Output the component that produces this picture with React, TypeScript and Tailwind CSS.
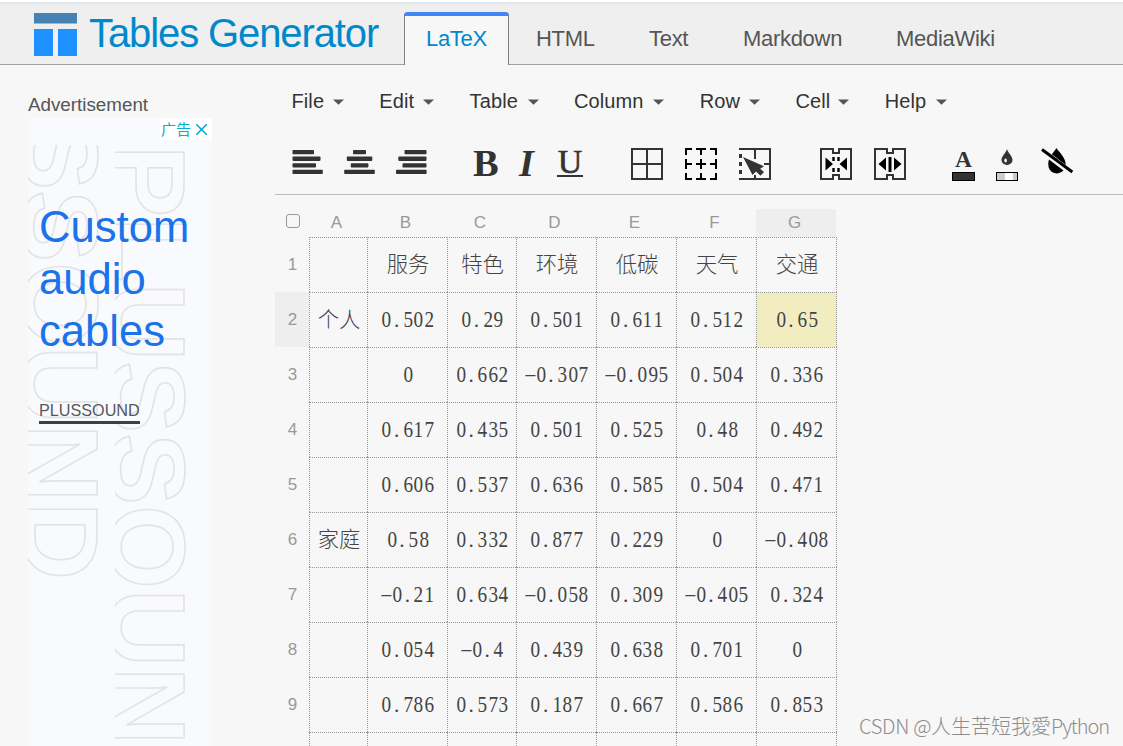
import type { ReactNode } from "react";
import { X } from "lucide-react";
import clsx from "clsx";

const tabs = [
  { label: "HTML", width: "w-[113px]" },
  { label: "Text", width: "w-[94px]" },
  { label: "Markdown", width: "w-[153px]" },
  { label: "MediaWiki", width: "w-[110px]" },
];

const menus = [
  { label: "File", width: "w-[52.5px]" },
  { label: "Edit", width: "w-[55px]" },
  { label: "Table", width: "w-[69px]" },
  { label: "Column", width: "w-[90.5px]" },
  { label: "Row", width: "w-[60.5px]" },
  { label: "Cell", width: "w-[54px]" },
  { label: "Help", width: "w-[62px]" },
];

const columns = ["A", "B", "C", "D", "E", "F", "G"];

const rows = [
  ["", "服务", "特色", "环境", "低碳", "天气", "交通"],
  ["个人", "0.502", "0.29", "0.501", "0.611", "0.512", "0.65"],
  ["", "0", "0.662", "-0.307", "-0.095", "0.504", "0.336"],
  ["", "0.617", "0.435", "0.501", "0.525", "0.48", "0.492"],
  ["", "0.606", "0.537", "0.636", "0.585", "0.504", "0.471"],
  ["家庭", "0.58", "0.332", "0.877", "0.229", "0", "-0.408"],
  ["", "-0.21", "0.634", "-0.058", "0.309", "-0.405", "0.324"],
  ["", "0.054", "-0.4", "0.439", "0.638", "0.701", "0"],
  ["", "0.786", "0.573", "0.187", "0.667", "0.586", "0.853"],
];

const selected = { row: 1, col: 6 };

const gridCols = "grid grid-cols-[34px_58px_80px_69px_80px_80px_80px_81px]";

const Logo = () => (
  <svg width="43" height="43" viewBox="0 0 43 43">
    <rect width="43" height="10.5" fill="#4682b4" />
    <rect y="16" width="19" height="27" fill="#1e90ff" />
    <rect x="24" y="16" width="19" height="27" fill="#1e90ff" />
  </svg>
);

const Header = () => (
  <header className="flex h-[65px] shrink-0 border-b border-[#a0a0a0] bg-[#efefef] pl-[34px]">
    <div className="mt-[13px]">
      <Logo />
    </div>
    <h1 className="ml-[12px] mt-[10px] w-[315px] whitespace-nowrap text-[40px] leading-[47px] tracking-[-1.1px] text-[#0088cc]">
      Tables Generator
    </h1>
    <nav className="flex text-[22px] tracking-[-0.3px] text-[#555]">
      <div className="relative mt-[12px] h-[53px] w-[105px] rounded-t-[4px] border-x border-[#808080] bg-[#f7f7f7] pl-[21px] text-[#0088cc]">
        <span className="absolute -left-px -right-px top-0 h-[4px] rounded-t-[4px] bg-[#4285f4]" />
        <span className="block pt-[11px] leading-[32px]">LaTeX</span>
      </div>
      <div className="ml-[27px] mt-[23px] flex leading-[32px]">
        {tabs.map((tab) => (
          <span key={tab.label} className={tab.width}>
            {tab.label}
          </span>
        ))}
      </div>
    </nav>
  </header>
);

const Advert = () => (
  <aside className="ml-[28px] w-[184px] shrink-0">
    <p className="mt-[28px] h-[25px] text-[18.8px] leading-[24px] text-[#555]">Advertisement</p>
    <div className="relative h-[628px] overflow-hidden bg-[#f9fafd]">
      <svg
        className="absolute left-0 top-[27px]"
        width="184"
        height="601"
        fill="none"
        stroke="#e2e3e6"
        strokeWidth="1.6"
        fontFamily="Liberation Sans"
        fontWeight="700"
        fontSize="108"
      >
        <svg x="0" y="0" width="80" height="601" overflow="hidden">
          <text transform="translate(-5 -27) rotate(90)">SSOUND</text>
        </svg>
        <svg x="87" y="0" width="90" height="601" overflow="hidden">
          <text transform="translate(-5 0) rotate(90)">PLUSSOUND</text>
        </svg>
      </svg>
      <div className="relative flex h-[22px] justify-end">
        <div className="flex w-[52px] items-center gap-[2px] bg-white pl-px font-['Noto_Sans_CJK_SC',sans-serif] text-[15px] leading-[22px] text-[#00aecd]">
          广告
          <X size={19} strokeWidth={2} className="-ml-px" />
        </div>
      </div>
      <div className="relative ml-[11px] mt-[61px] text-[43.6px] leading-[52px] text-[#1a73e8]">
        Custom
        <br />
        audio
        <br />
        cables
      </div>
      <div className="relative ml-[11px] mt-[46px] flex">
        <span className="h-[21px] w-[101px] whitespace-nowrap border-b-[3px] border-[#3c4043] text-[16.2px] leading-[14px] text-[#55585b]">
          PLUSSOUND
        </span>
      </div>
    </div>
  </aside>
);

const MenuBar = () => (
  <div className="flex gap-[35.3px] pl-[16.5px] pt-[24px] text-[20px] leading-[24px] tracking-[0.1px] text-[#333]">
    {menus.map((menu) => (
      <div key={menu.label} className={clsx("flex items-center justify-between", menu.width)}>
        {menu.label}
        <svg width="11" height="6" viewBox="0 0 11 6" className="mt-[2px]">
          <path d="M0 0.5H11L5.5 5.8Z" fill="#555" />
        </svg>
      </div>
    ))}
  </div>
);

const AlignIcon = ({ bars }: { bars: number[][] }) => (
  <svg width="31" height="25" viewBox="0 0 31 25" fill="#333">
    {bars.map(([x, w], i) => (
      <rect key={i} x={x} y={i * 6.6} width={w} height="4.3" rx="0.8" />
    ))}
  </svg>
);

const Icon32 = ({ children }: { children: ReactNode }) => (
  <svg width="32" height="32" viewBox="0 0 32 32" fill="none" stroke="#333" strokeWidth="2">
    {children}
  </svg>
);

const Toolbar = () => (
  <div className="mt-[34px] flex h-[48px] border-b border-[#bbb] pl-[17px]">
    <div className="mt-[3px] flex gap-[21px]">
      <AlignIcon bars={[[0.5, 21.5], [0.5, 28], [0.5, 23.5], [0.5, 30.3]]} />
      <AlignIcon bars={[[9, 13], [2.8, 25.5], [6.8, 17.6], [0.2, 30.6]]} />
      <AlignIcon bars={[[8.5, 22], [2.3, 28.2], [6.5, 24], [0, 30.6]]} />
    </div>
    <div className="ml-[46px] flex font-['Liberation_Serif',serif] text-[38.5px] leading-[32px] text-[#333]">
      <span className="w-[46px] font-bold">B</span>
      <span className="w-[38px] font-bold italic">I</span>
      <span className="mt-[3px] flex h-[27px] w-[26px] justify-center border-b-2 border-[#333] text-[34px] leading-[24px] [-webkit-text-stroke:0.6px_#333]">
        U
      </span>
    </div>
    <div className="ml-[48px] mt-px flex gap-[22px]">
      <Icon32>
        <path d="M1 1H31V31H1ZM16 1V31M1 16H31" />
      </Icon32>
      <Icon32>
        <g stroke="#000">
          <path d="M1 7V1H7M11 1H21M25 1H31V7M31 11V21M31 25V31H25M21 31H11M7 31H1V25M1 21V11" />
          <path d="M16 1V7M16 31V25M1 16H7M31 16H25M16 11V21M11 16H21" />
        </g>
      </Icon32>
      <Icon32>
        <path d="M0 1H31V31H0M16 1V11M25 16H31M16 27V31" />
        <path d="M1.500 6V27" strokeWidth="3" strokeDasharray="4 4" />
        <path d="M4 9L25 18.300L21.200 20.700L25 24L21.500 27.800L17 23.500L13.500 27Z" fill="#333" stroke="none" />
      </Icon32>
    </div>
    <div className="ml-[49px] mt-px flex gap-[22px]">
      <Icon32>
        <path d="M1 1H13V5H19V1H31V31H19V27H13V31H1Z" />
        <path d="M5.5 9.5V22.5L13 16ZM27 9.5V22.5L19.5 16Z" fill="#000" stroke="none" />
        <path d="M13.5 9V13M18.5 9V13M13.5 20V24M18.5 20V24" stroke="#000" strokeWidth="2.4" />
      </Icon32>
      <Icon32>
        <path d="M1 1H13V5H19V1H31V31H19V27H13V31H1Z" />
        <path d="M12 9.5V22.5L4.5 16ZM20 9.5V22.5L27.5 16Z" fill="#000" stroke="none" />
        <path d="M16 9V24" stroke="#000" strokeWidth="3" />
      </Icon32>
    </div>
    <div className="ml-[46px] flex w-[23px] flex-col items-center">
      <span className="h-[25px] font-['Liberation_Serif',serif] text-[23.5px] font-bold leading-[25px] text-[#333]">
        A
      </span>
      <span className="h-[9px] w-[23px] border border-black bg-[#333]" />
    </div>
    <div className="ml-[21px] flex w-[22px] flex-col items-center">
      <svg width="12" height="17" viewBox="0 0 12 17" className="mb-[6px] mt-[2px]">
        <path d="M6 0C7 4 11.5 7 11.5 11A5.5 5 0 0 1 0.5 11C0.5 7 5 4 6 0Z" fill="#333" />
        <ellipse cx="4.6" cy="11.4" rx="1.3" ry="2" fill="#f7f7f7" />
      </svg>
      <span className="flex h-[9px] w-[22px] justify-center border border-black bg-[#ccc]">
        <span className="ml-[3px] w-[8px] bg-white" />
      </span>
    </div>
    <svg width="33" height="27" viewBox="0 0 33 27" className="ml-[23px] mt-px">
      <path d="M15.3 0C17 2.500 20 5 22.500 9.500C24 12 24.500 14 24.800 17L10.800 6.300C12.500 4 14.500 2 15.300 0Z" fill="#000" />
      <path d="M8 11.500L22.500 22.600C20.500 24.500 18 25.400 15.500 25.400C9.500 25.400 5.500 19 8 11.500Z" fill="#000" />
      <path d="M1 1.500L31.300 24" stroke="#000" strokeWidth="3" />
    </svg>
  </div>
);

// Every character takes half an em, as in a duospaced CJK font.
const CellText = ({ value }: { value: string }) => {
  if (!/^[-\d.]+$/.test(value)) return <>{value}</>;
  return (
    <span className="-mt-px flex">
      {value.split("").map((ch, i) => (
        <span
          key={i}
          className={clsx(
            "w-[10.67px]",
            ch === "." && "pl-[2px]",
            ch === "-" && "-translate-y-px scale-x-[1.8] scale-y-[0.8] text-center",
            /\d/.test(ch) && "scale-x-[0.9] scale-y-[1.06]"
          )}
        >
          {ch}
        </span>
      ))}
    </span>
  );
};

const cellBorder = "border-l border-t border-dotted border-[#999]";

const Sheet = () => (
  <div className="mt-[14px] text-[17px] text-[#999]">
    <div className={clsx(gridCols, "h-[28px]")}>
      <span className="ml-[11px] mt-[5px] h-[14px] w-[14px] rounded-[3px] border-[1.5px] border-[#999]" />
      {columns.map((name, c) => (
        <span
          key={name}
          className={clsx("pr-[3px] text-center leading-[27px]", c === selected.col && "mr-px bg-[#eee]")}
        >
          {name}
        </span>
      ))}
    </div>
    {rows.map((row, r) => (
      <div key={r} className={clsx(gridCols, "h-[55px]")}>
        <span className={clsx("pl-px text-center leading-[55px]", r === selected.row && "bg-[#eee]")}>{r + 1}</span>
        {row.map((value, c) => (
          <div
            key={c}
            className={clsx(
              cellBorder,
              "flex items-center justify-center pl-px font-['Liberation_Serif','Noto_Sans_CJK_SC',serif] text-[21.33px] font-light leading-[30px] text-[#444]",
              c === 6 && "border-r",
              r === selected.row && c === selected.col && "bg-[#f2edc1]"
            )}
          >
            <CellText value={value} />
          </div>
        ))}
      </div>
    ))}
    <div className={clsx(gridCols, "h-[14px]")}>
      <span />
      {columns.map((name, c) => (
        <span key={name} className={clsx(cellBorder, c === 6 && "border-r")} />
      ))}
    </div>
  </div>
);

export default function App() {
  return (
    <div className="relative flex h-[746px] w-[1123px] flex-col overflow-hidden bg-[#f7f7f7] font-['Liberation_Sans',Arial,sans-serif]">
      <div className="absolute inset-x-0 top-0 h-[4px] border-b-2 border-[#e2e7ec] bg-white" />
      <Header />
      <div className="flex">
        <Advert />
        <main className="ml-[63px] flex-1">
          <MenuBar />
          <Toolbar />
          <Sheet />
        </main>
      </div>
      <span className="absolute bottom-[5px] right-[14px] font-['Noto_Sans_CJK_SC',sans-serif] text-[20px] font-light leading-[30px] text-[#8c8c8c]">
        <span className="tracking-[-0.3px]">CSDN @</span>人生苦短我愛<span className="tracking-[-1.1px]">Python</span>
      </span>
    </div>
  );
}
